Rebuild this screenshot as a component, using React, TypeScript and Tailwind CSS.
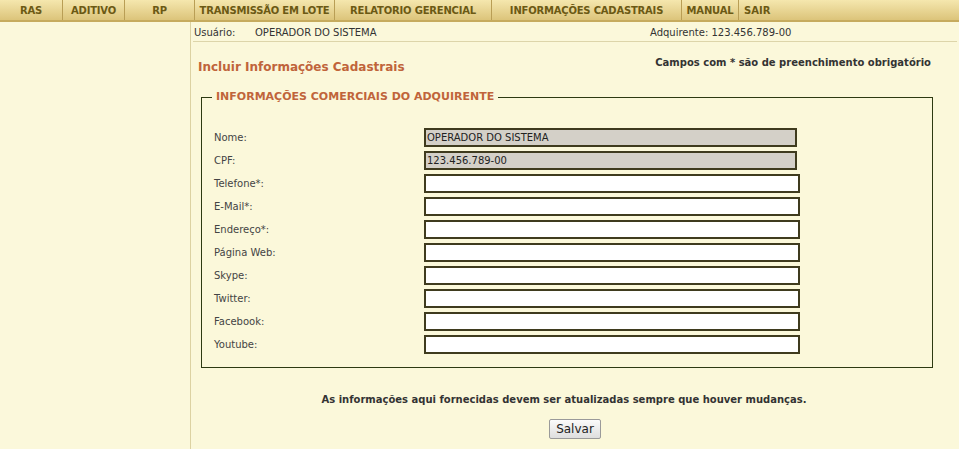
import React from "react";

const navItems = [
  { label: "RAS", w: "w-[63px]" },
  { label: "ADITIVO", w: "w-[62px]" },
  { label: "RP", w: "w-[70px]" },
  { label: "TRANSMISSÃO EM LOTE", w: "w-[140px]" },
  { label: "RELATORIO GERENCIAL", w: "w-[157px]" },
  { label: "INFORMAÇÕES CADASTRAIS", w: "w-[190px]" },
  { label: "MANUAL", w: "w-[57px]" },
];

const fields = [
  { label: "Nome:", value: "OPERADOR DO SISTEMA", readOnly: true },
  { label: "CPF:", value: "123.456.789-00", readOnly: true },
  { label: "Telefone*:", value: "" },
  { label: "E-Mail*:", value: "" },
  { label: "Endereço*:", value: "" },
  { label: "Página Web:", value: "" },
  { label: "Skype:", value: "" },
  { label: "Twitter:", value: "" },
  { label: "Facebook:", value: "" },
  { label: "Youtube:", value: "" },
];

const App = () => {
  return (
    <div className="w-[959px] h-[449px] overflow-hidden bg-[#fbf8da] text-[#333] font-['DejaVu_Sans',Verdana,sans-serif]">
      {/* menu */}
      <div className="h-[22px] flex items-stretch bg-gradient-to-b from-[#f5e7ae] to-[#dcc47a] border-b-2 border-[#c6ab5e]">
        {navItems.map((item) => (
          <div
            key={item.label}
            className={`${item.w} flex items-center justify-center border-r border-[#b99e55] text-[10px] font-bold text-[#6b5914] tracking-[-0.2px]`}
          >
            {item.label}
          </div>
        ))}
        <div className="pl-[5px] flex items-center text-[10px] font-bold text-[#6b5914]">SAIR</div>
      </div>

      <div className="flex h-[427px]">
        <div className="w-[191px] shrink-0 border-r border-[#dcd2a2] bg-[#fbf8db]" />

        <div className="flex-1">
          <div className="h-[20px] flex items-center pt-[2px] border-b border-[#ddd5aa] text-[10px] text-[#333] mx-[2px]">
            <span className="pl-[1px] w-[62px]">Usuário:</span>
            <span className="w-[395px]">OPERADOR DO SISTEMA</span>
            <span>Adquirente: 123.456.789-00</span>
          </div>

          <div className="flex items-start justify-between pl-[7px] pr-[28px] pt-[13px]">
            <h1 className="text-[12px] font-bold text-[#c0643a] pt-[3px]">Incluir Informações Cadastrais</h1>
            <p className="text-[10px] font-bold text-[#333]">Campos com * são de preenchimento obrigatório</p>
          </div>

          <fieldset className="ml-[10px] mr-[26px] mt-[13px] h-[279px] border border-[#2d3a12] pl-[12px] pt-[22px]">
            <legend className="-ml-[2px] px-[4px] text-[11px] font-bold text-[#c0643a]">
              INFORMAÇÕES COMERCIAIS DO ADQUIRENTE
            </legend>
            <div className="flex flex-col gap-[4px]">
              {fields.map((f) => (
                <div key={f.label} className="flex items-center h-[19px]">
                  <label className="w-[210px] text-[10px] text-[#444]">{f.label}</label>
                  <input
                    readOnly={f.readOnly}
                    defaultValue={f.value}
                    className={`h-[19px] border-2 border-[#3f3b1e] px-[1px] text-[10px] text-[#222] outline-none ${
                      f.readOnly ? "w-[373px] bg-[#d4d0c8]" : "w-[376px] bg-white"
                    }`}
                  />
                </div>
              ))}
            </div>
          </fieldset>

          <p className="mt-[24px] text-center text-[10px] font-bold text-[#333] pr-[22px]">
            As informações aqui fornecidas devem ser atualizadas sempre que houver mudanças.
          </p>

          <div className="flex justify-center mt-[12px]">
            <button className="h-[20px] w-[52px] border border-[#9a9a9a] rounded-[2px] bg-gradient-to-b from-[#fbfbfb] to-[#dedede] text-[12px] text-[#222]">
              Salvar
            </button>
          </div>
        </div>
      </div>
    </div>
  );
};

export default App;
